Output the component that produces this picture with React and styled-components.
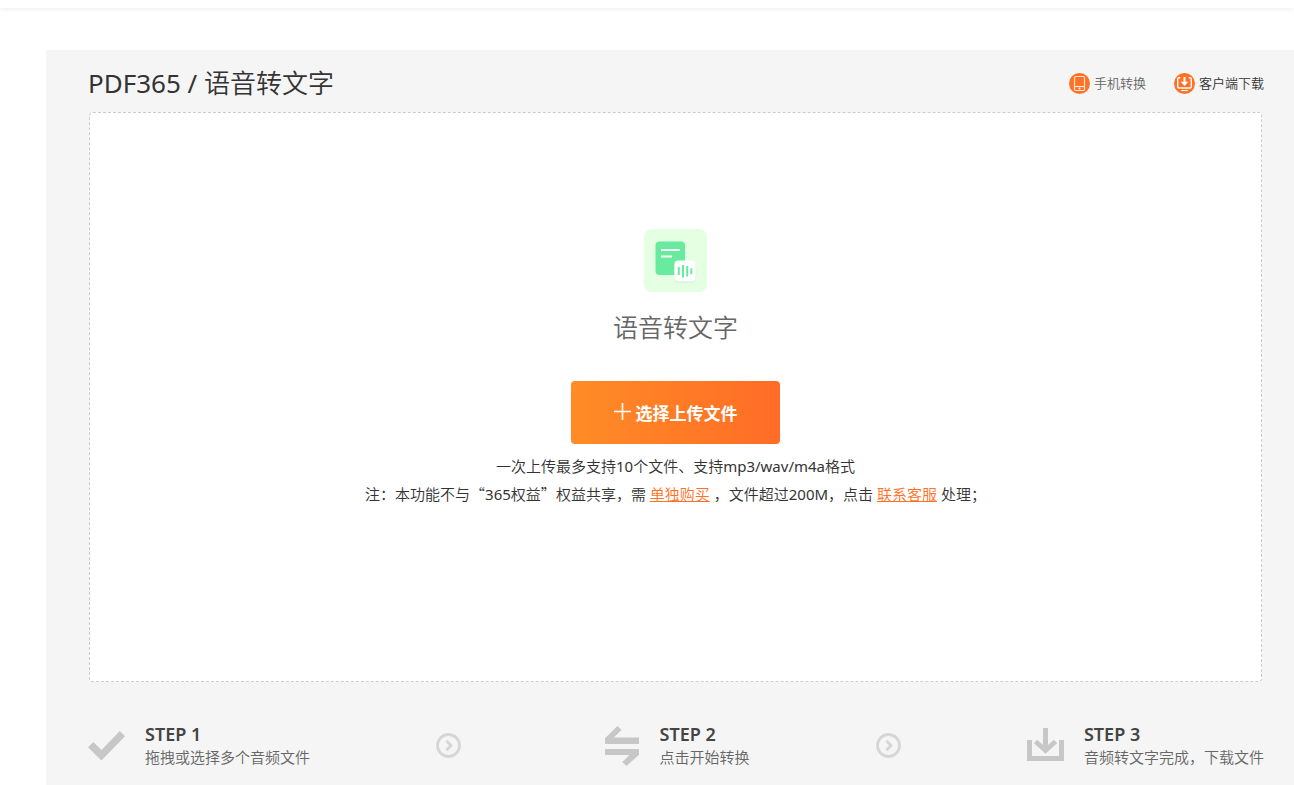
import React from "react";
import styled, { createGlobalStyle } from "styled-components";

const GlobalStyle = createGlobalStyle`
  * {
    box-sizing: border-box;
  }
  body {
    margin: 0;
    background: #fff;
    color: #333;
    font-family: "Noto Sans", "Noto Sans CJK SC", sans-serif;
    font-size: 15px;
    font-weight: 350;
  }
  h1, h2, h3, p, ol {
    margin: 0;
    padding: 0;
    font-weight: inherit;
  }
`;

const Page = styled.div`
  min-height: 100vh;
  display: flex;
  flex-direction: column;
`;
const TopBar = styled.header`
  height: 8px;
  background: #fff;
  box-shadow: 0 1px 5px rgba(0, 0, 0, 0.08);
`;
const Panel = styled.main`
  flex: 1;
  display: flex;
  flex-direction: column;
  margin: 42px 0 0 46px;
  padding: 0 30px 0 42px;
  background: #f5f5f5;
`;
const PanelHead = styled.div`
  display: flex;
  align-items: center;
  justify-content: space-between;
  height: 62px;
  padding-top: 4px;
`;
const Title = styled.h1`
  font-size: 26px;
  line-height: 36px;
`;
const Latin = styled.span`
  font-weight: 400;
`;
const HeadLinks = styled.nav`
  display: flex;
  gap: 28px;
`;
const HeadLink = styled.a`
  display: flex;
  align-items: center;
  gap: 4px;
  color: ${(props) => (props.$dark ? "#333" : "#666")};
  font-size: 13px;
  line-height: 20px;
  text-decoration: none;
`;

const DropZone = styled.section`
  flex: 1;
  display: flex;
  flex-direction: column;
  align-items: center;
  margin: 0 2px 0 1px;
  padding: 116px 20px 60px;
  background: #fff;
  border: 1px dashed #ccc;
  border-radius: 4px;
`;
const ToolName = styled.h2`
  margin: 17px 0 35px;
  color: #666;
  font-size: 25px;
  line-height: 37px;
`;
const UploadButton = styled.button`
  display: flex;
  align-items: center;
  justify-content: center;
  gap: 4px;
  width: 209px;
  height: 63px;
  margin-bottom: 8px;
  border: 0;
  border-radius: 4px;
  background: linear-gradient(to right, #ff8c26, #ff6c26);
  color: #fff;
  font-family: inherit;
  font-size: 17px;
  font-weight: 700;
  cursor: pointer;
`;
const Note = styled.p`
  line-height: 28px;
  text-align: center;
`;
const Quote = styled.span`
  font-family: "Noto Sans CJK SC", sans-serif;
`;
const NoteLink = styled.a`
  color: #ff7226;
`;

const Steps = styled.ol`
  display: flex;
  align-items: center;
  justify-content: space-between;
  height: 103px;
  padding-top: 24px;
  list-style: none;
`;
const StepItem = styled.li`
  display: flex;
  align-items: center;
`;
const StepIcon = styled.div`
  display: flex;
  justify-content: flex-end;
  width: ${(props) => props.$width}px;
  margin-right: 20px;
`;
const StepName = styled.h3`
  color: #444;
  font-size: 18px;
  line-height: 23px;
  font-weight: 600;
`;
const StepText = styled.p`
  color: #666;
  font-size: 15px;
  line-height: 23px;
`;

function PhoneIcon() {
  return (
    <svg width="21" height="21" viewBox="0 0 21 21" fill="none">
      <circle cx="10.5" cy="10.5" r="10.5" fill="#ff7226" />
      <rect x="5.5" y="3.5" width="10" height="14" rx="1.6" stroke="#ffe3d3" strokeWidth="1.2" />
      <path d="M5.5 13.5h10" stroke="#ffe3d3" strokeWidth="1.2" />
      <circle cx="10.5" cy="15.5" r="1" fill="#fff" />
    </svg>
  );
}

function ClientIcon() {
  return (
    <svg width="21" height="21" viewBox="0 0 21 21" fill="none">
      <circle cx="10.5" cy="10.5" r="10.5" fill="#ff7226" />
      <path
        d="M6.2 4.7H5Q3.7 4.7 3.7 6v7.7Q3.7 15 5 15h11q1.3 0 1.3-1.3V6Q17.3 4.7 16 4.7h-1.2"
        stroke="#fff"
        strokeWidth="1.4"
      />
      <path d="M7.3 17.5h6.4" stroke="#fff" strokeWidth="1.2" />
      <path d="M9.5 4h2v4.8h2.8l-3.8 4.2-3.8-4.2h2.8z" fill="#fff" />
    </svg>
  );
}

function AudioTextIcon() {
  return (
    <svg width="63" height="63" viewBox="0 0 63 63" fill="none">
      <rect width="63" height="63" rx="8" fill="#e5ffe3" />
      <rect x="11.5" y="12.5" width="29.5" height="33.5" rx="4" fill="#69eb9f" />
      <path d="M17 21h19M17 27.5h11" stroke="#fff" strokeWidth="2" />
      <rect x="30.5" y="33" width="21" height="20.5" rx="3.5" fill="#c3f2cb" />
      <rect x="30.5" y="31.5" width="21" height="21" rx="3.5" fill="#fff" />
      <path d="M34.8 38v8M39 36v12.5M43.2 37v10.5M47.3 39.3v6" stroke="#69eb9f" strokeWidth="2" />
    </svg>
  );
}

function PlusIcon() {
  return (
    <svg width="18" height="20" viewBox="0 0 18 20">
      <path d="M8.5 0v17M0 8.5h17" stroke="#fff" strokeWidth="1.6" />
    </svg>
  );
}

function CheckIcon() {
  return (
    <svg width="37" height="30" viewBox="0 0 37 30">
      <path d="M0 16.2l5.3-5.3 8.2 8.2L31.8 0 37 5.2 13.4 29.6z" fill="#c7c7c7" />
    </svg>
  );
}

function SwapIcon() {
  return (
    <svg width="34" height="40" viewBox="0 0 34 40" fill="#c7c7c7">
      <path d="M0 18v-5.8L12.5 0l4 4-7.6 7.6H34V18z" />
      <path d="M34 23v5.8L21.5 40l-4.2-4 7.1-7H0v-6z" />
    </svg>
  );
}

function SaveIcon() {
  return (
    <svg width="37" height="35" viewBox="0 0 37 35" fill="none" stroke="#c7c7c7" strokeWidth="5">
      <path d="M2.5 12v18.5h32V12" />
      <path d="M18.5 0v23" />
      <path d="M8.5 13.5l10 9 10-9" />
    </svg>
  );
}

function NextIcon() {
  return (
    <svg width="25" height="25" viewBox="0 0 25 25" fill="none" stroke="#d6d6d6" strokeWidth="2.8">
      <circle cx="12.5" cy="12.5" r="11" />
      <path d="M10.3 7.8l4.7 4.7-4.7 4.7" />
    </svg>
  );
}

function Step({ name, text, icon, iconWidth }) {
  return (
    <StepItem>
      <StepIcon $width={iconWidth}>{icon}</StepIcon>
      <div>
        <StepName>{name}</StepName>
        <StepText>{text}</StepText>
      </div>
    </StepItem>
  );
}

export default function App() {
  return (
    <>
      <GlobalStyle />
      <Page>
        <TopBar />
        <Panel>
          <PanelHead>
            <Title>
              <Latin>PDF365 / </Latin>语音转文字
            </Title>
            <HeadLinks>
              <HeadLink href="#mobile">
                <PhoneIcon />
                手机转换
              </HeadLink>
              <HeadLink href="#client" $dark>
                <ClientIcon />
                客户端下载
              </HeadLink>
            </HeadLinks>
          </PanelHead>
          <DropZone>
            <AudioTextIcon />
            <ToolName>语音转文字</ToolName>
            <UploadButton type="button">
              <PlusIcon />
              选择上传文件
            </UploadButton>
            <Note>
              一次上传最多支持<Latin>10</Latin>个文件、支持<Latin>mp3/wav/m4a</Latin>格式
            </Note>
            <Note>
              注：本功能不与<Quote>“</Quote>
              <Latin>365</Latin>权益<Quote>”</Quote>权益共享，需{" "}
              <NoteLink href="#buy">单独购买</NoteLink> ，文件超过
              <Latin>200M</Latin>，点击 <NoteLink href="#service">联系客服</NoteLink>{" "}
              处理；
            </Note>
          </DropZone>
          <Steps>
            <Step
              name="STEP 1"
              text="拖拽或选择多个音频文件"
              icon={<CheckIcon />}
              iconWidth={37}
            />
            <StepItem>
              <NextIcon />
            </StepItem>
            <Step name="STEP 2" text="点击开始转换" icon={<SwapIcon />} iconWidth={52} />
            <StepItem>
              <NextIcon />
            </StepItem>
            <Step
              name="STEP 3"
              text="音频转文字完成，下载文件"
              icon={<SaveIcon />}
              iconWidth={37}
            />
          </Steps>
        </Panel>
      </Page>
    </>
  );
}
